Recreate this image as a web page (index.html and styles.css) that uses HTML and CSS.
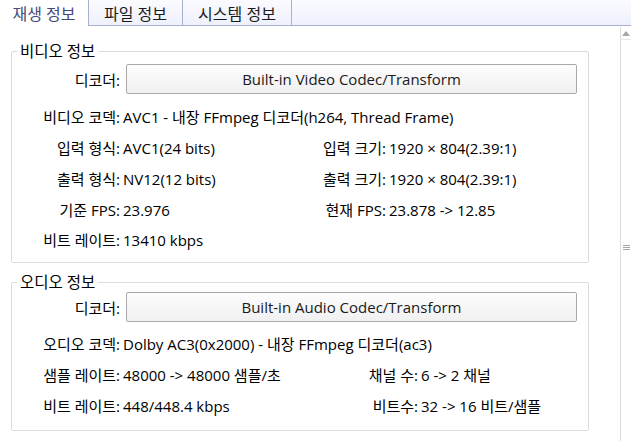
FILE: index.html
```html
<!DOCTYPE html>
<html lang="ko">
<head>
  <meta charset="UTF-8">
  <meta name="viewport" content="width=device-width, initial-scale=1.0">
  <title>재생 정보</title>
  <link rel="stylesheet" href="styles.css">
</head>
<body>
  <div class="tabs">
    <div class="tab active">재생 정보</div>
    <div class="tab">파일 정보</div>
    <div class="tab">시스템 정보</div>
    <div class="tab-fill"></div>
  </div>

  <div class="page">
    <div class="content">
      <!-- Video -->
      <fieldset class="group video">
        <legend>비디오 정보</legend>
        <div class="row decoder">
          <span class="label">디코더:</span>
          <button class="codec-btn">Built-in Video Codec/Transform</button>
        </div>
        <div class="row">
          <span class="label">비디오 코덱:</span>
          <span class="value">AVC1 - 내장 FFmpeg 디코더(h264, Thread Frame)</span>
        </div>
        <div class="row pair">
          <span class="label">입력 형식:</span>
          <span class="value">AVC1(24 bits)</span>
          <span class="label">입력 크기:</span>
          <span class="value">1920 × 804(2.39:1)</span>
        </div>
        <div class="row pair">
          <span class="label">출력 형식:</span>
          <span class="value">NV12(12 bits)</span>
          <span class="label">출력 크기:</span>
          <span class="value">1920 × 804(2.39:1)</span>
        </div>
        <div class="row pair">
          <span class="label">기준 FPS:</span>
          <span class="value">23.976</span>
          <span class="label">현재 FPS:</span>
          <span class="value">23.878 -&gt; 12.85</span>
        </div>
        <div class="row short">
          <span class="label">비트 레이트:</span>
          <span class="value">13410 kbps</span>
        </div>
      </fieldset>

      <!-- Audio -->
      <fieldset class="group audio">
        <legend>오디오 정보</legend>
        <div class="row decoder">
          <span class="label">디코더:</span>
          <button class="codec-btn">Built-in Audio Codec/Transform</button>
        </div>
        <div class="row">
          <span class="label">오디오 코덱:</span>
          <span class="value">Dolby AC3(0x2000) - 내장 FFmpeg 디코더(ac3)</span>
        </div>
        <div class="row pair wide">
          <span class="label">샘플 레이트:</span>
          <span class="value">48000 -&gt; 48000 샘플/초</span>
          <span class="label">채널 수:</span>
          <span class="value">6 -&gt; 2 채널</span>
        </div>
        <div class="row pair wide">
          <span class="label">비트 레이트:</span>
          <span class="value">448/448.4 kbps</span>
          <span class="label">비트수:</span>
          <span class="value">32 -&gt; 16 비트/샘플</span>
        </div>
      </fieldset>
    </div>

    <div class="scrollbar">
      <div class="scroll-up">
        <svg width="8" height="5" viewBox="0 0 8 5"><path d="M0 5 L4 0 L8 5 Z" fill="#a6a6a6"/></svg>
      </div>
      <div class="grip">
        <span></span><span></span><span></span>
      </div>
    </div>
  </div>
</body>
</html>
```

FILE: styles.css
```css
body {
  margin: 0;
  font-family: "Open Sans", "Noto Sans CJK KR", sans-serif;
  font-size: 15px;
  color: #000000;
  background-color: #ffffff;
  overflow: hidden;
}

/* Tab strip */
.tabs {
  display: flex;
  height: 26px;
}

.tab {
  display: flex;
  align-items: center;
  justify-content: center;
  border-bottom: 1px solid #a7b0d2;
  border-left: 1px solid #a7b0d2;
  background: linear-gradient(#fbfbfe, #eef0fc);
  color: #1a1a1a;
  font-size: 16px;
}

.tab:nth-child(2) {
  width: 93px;
}

.tab:nth-child(3) {
  width: 108px;
}

.tab.active {
  width: 88px;
  border: none;
  background: #ffffff;
  color: #44487a;
}

.tab-fill {
  flex: 1;
  border-left: 1px solid #a7b0d2;
  border-bottom: 1px solid #a7b0d2;
  background: linear-gradient(#fbfbfe, #eef0fc);
}

/* Page */
.page {
  display: flex;
  height: 415px;
}

.content {
  width: 609px;
  padding-left: 11px;
}

.group {
  width: 576px;
  margin: 16px 0 0;
  padding: 4px 0 8px;
  border: 1px solid #dcdcdc;
  border-radius: 2px;
}

.group.audio {
  margin-top: 10px;
  padding-top: 1px;
  padding-bottom: 9px;
}

.group legend {
  margin-left: 5px;
  padding: 0 3px;
  line-height: 18px;
  font-size: 15.5px;
}

.row {
  display: grid;
  grid-template-columns: 108px 1fr;
  align-items: center;
  height: 31px;
  white-space: nowrap;
}

.row.pair {
  grid-template-columns: 108px 150px 116px 1fr;
}

.row.pair.wide {
  grid-template-columns: 108px 182px 116px 1fr;
}

.row.decoder {
  height: 30px;
  margin-bottom: 7px;
  grid-template-columns: 108px 451px;
  column-gap: 6px;
}

.group.audio .row.decoder {
  margin-bottom: 6px;
}

.row.short {
  height: 29px;
}

.label {
  text-align: right;
}

.value {
  padding-left: 3px;
}

.codec-btn {
  height: 30px;
  border: 1px solid #a9a9a9;
  border-radius: 2px;
  background: linear-gradient(#fdfdfd, #f0f0f0);
  font-family: inherit;
  font-size: 15px;
  color: #1a1a1a;
}

/* Scrollbar */
.scrollbar {
  width: 10px;
  border-left: 1px solid #dcdcdc;
  margin-top: 1px;
  display: flex;
  flex-direction: column;
}

.scroll-up {
  height: 12px;
  border-bottom: 1px solid #e6e6e6;
  display: flex;
  align-items: center;
  justify-content: center;
}

.grip {
  margin-top: 205px;
  display: flex;
  flex-direction: column;
  align-items: center;
  gap: 1px;
}

.grip span {
  width: 7px;
  height: 1px;
  background-color: #a6a6a6;
}
```
